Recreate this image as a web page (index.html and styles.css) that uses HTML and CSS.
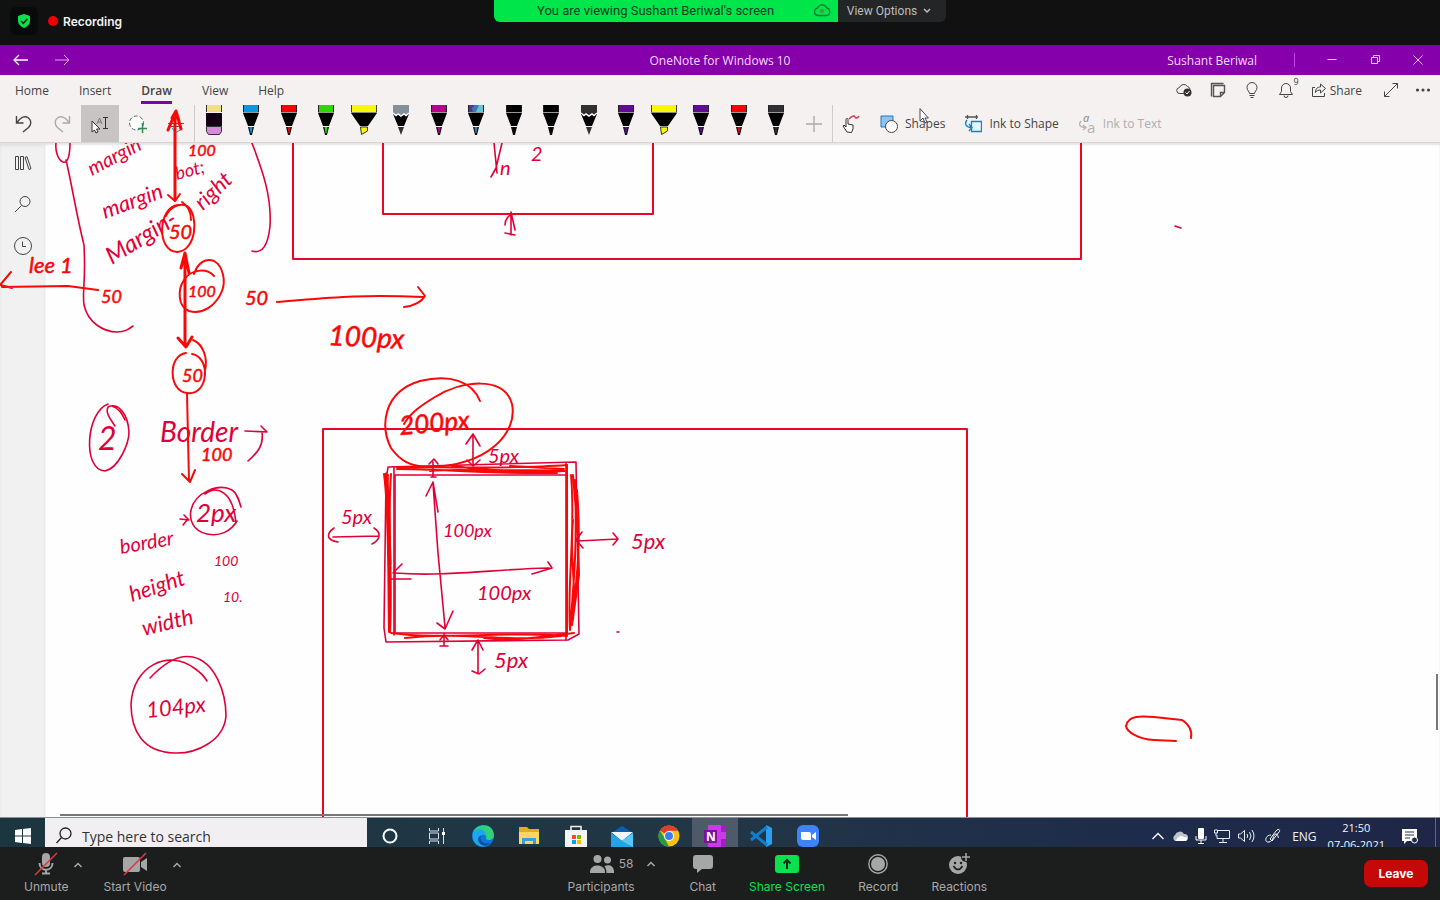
FILE: index.html
```html
<!DOCTYPE html>
<html lang="en">
<head>
<meta charset="utf-8">
<meta name="viewport" content="width=device-width, initial-scale=1">
<title>OneNote for Windows 10 - shared screen</title>
<link rel="stylesheet" href="styles.css">
</head>
<body>
<svg class="defs" aria-hidden="true">
  <symbol id="pen" viewBox="0 0 28 30">
    <path d="M6 0h16v7H6z" fill="currentColor"/><path d="M6.500 0v7M21.500 0v7" stroke="#222"/>
    <path d="M6 8h16l-5 13h-6z" fill="#000"/><path d="M6 7.500h16" stroke="#999"/>
    <path d="M11 22h6l-2 8h-2z" fill="#111"/><path d="M12.500 22h3l-1 6h-1z" fill="currentColor"/>
  </symbol>
  <symbol id="marker" viewBox="0 0 28 30">
    <path d="M1 0h26v7H1z" fill="currentColor"/><path d="M1.500 0v7M26.500 0v7" stroke="#444"/>
    <path d="M1 8h26L18 21h-8z" fill="#000"/><path d="M1 7.500h26" stroke="#888"/>
    <path d="M10.500 22h7v4l-6 3.500z" fill="currentColor" stroke="#333"/>
  </symbol>
  <symbol id="pencil" viewBox="0 0 28 30">
    <path d="M6 0h16v10H6z" fill="currentColor"/><path d="M6 9l3 2 2-2 3 2 3-2 2 2 3-2-5 12h-6z" fill="#000"/>
    <path d="M6 8l3 2.500L11 9l3 2 3-2 2 1.500L22 8" fill="none" stroke="#fff" stroke-width="1.500"/>
    <path d="M11 22h6l-3 8z" fill="#333"/>
  </symbol>
  <symbol id="up" viewBox="0 0 10 10"><path d="M1.500 7 5 3.500 8.500 7" fill="none" stroke="currentColor" stroke-width="1.500"/></symbol>
</svg>

<header class="meeting-top">
  <div class="rec">
    <span class="shield"><svg width="14" height="16" viewBox="0 0 14 16"><path d="M7 1l6 2v5c0 3-2.500 5.500-6 7-3.500-1.500-6-4-6-7V3z" fill="#0be04f"/><path d="M4 8l2.300 2.300L10.300 6" fill="none" stroke="#0a2a12" stroke-width="1.600"/></svg></span>
    <span class="dot"></span><strong>Recording</strong>
  </div>
  <div class="banner">
    <div class="viewing"><span>You are viewing Sushant Beriwal's screen</span>
      <svg width="18" height="14" viewBox="0 0 18 14"><path d="M5 12.500a3.700 3.700 0 0 1-.6-7.300A5 5 0 0 1 13.800 5a3.800 3.800 0 0 1-.5 7.500z" fill="none" stroke="#157a35" stroke-width="1.300"/><circle cx="9" cy="8" r="2" fill="#5a8a3a"/></svg></div>
    <button class="view-options">View Options <svg width="8" height="6" viewBox="0 0 8 6"><path d="M1 1l3 3 3-3" fill="none" stroke="currentColor" stroke-width="1.500"/></svg></button>
  </div>
</header>

<div class="titlebar">
  <nav class="history">
    <button aria-label="Back"><svg width="16" height="12" viewBox="0 0 16 12"><path d="M15 6H1M6 1L1 6l5 5" fill="none" stroke="#fff" stroke-width="1.300"/></svg></button>
    <button aria-label="Forward"><svg width="16" height="12" viewBox="0 0 16 12"><path d="M1 6h14M10 1l5 5-5 5" fill="none" stroke="#e3a6f5"/></svg></button>
  </nav>
  <span class="app-name">OneNote for Windows 10</span>
  <div class="window">
    <span class="user">Sushant Beriwal</span>
    <button aria-label="Minimize"><svg width="12" height="12" viewBox="0 0 12 12"><path d="M1.500 5.500h9" stroke="#f2c8ff"/></svg></button>
    <button aria-label="Restore"><svg width="12" height="12" viewBox="0 0 12 12"><path d="M2.500 3.500h6v6h-6zM4.500 3.500v-2h6v6h-2" fill="none" stroke="#f2c8ff"/></svg></button>
    <button aria-label="Close"><svg width="12" height="12" viewBox="0 0 12 12"><path d="M1.500 1.500l9 9m0-9l-9 9" stroke="#f2c8ff"/></svg></button>
  </div>
</div>

<main class="notebook">
  <div class="menu">
    <nav class="tabs">
      <button>Home</button><button>Insert</button><button class="on">Draw</button><button>View</button><button>Help</button>
    </nav>
    <div class="actions">
      <button aria-label="Synced"><svg width="18" height="18" viewBox="0 0 18 18"><path d="M9 12.500H5a3 3 0 0 1-.5-6 4.500 4.500 0 0 1 8-1A3.500 3.500 0 0 1 15 8" fill="none" stroke="#444"/><circle cx="12.500" cy="11.500" r="4" fill="#333"/><path d="M10.500 11.500l1.500 1.500 2.500-3" fill="none" stroke="#fff"/></svg></button>
      <button aria-label="Notes"><svg width="18" height="18" viewBox="0 0 18 18"><path d="M2.500 15.500v-13h12M4.500 4.500h11v7l-4 4h-7zM15.500 11.500h-4v4" fill="none" stroke="#555" stroke-width="1.400"/></svg></button>
      <button aria-label="Tips"><svg width="18" height="18" viewBox="0 0 18 18"><path d="M6.500 12.500c0-2-2.500-3-2.500-6a5 5 0 0 1 10 0c0 3-2.500 4-2.500 6zM6.500 14.500h5M7.500 16.500h3" fill="none" stroke="#444"/></svg></button>
      <button aria-label="Notifications" class="bell"><svg width="18" height="18" viewBox="0 0 18 18"><path d="M2.500 13.500h13l-2-3V7a4.500 4.500 0 0 0-9 0v3.500zM7 14.500a2 2 0 0 0 4 0" fill="none" stroke="#444"/></svg><sup>9</sup></button>
      <button class="share"><svg width="16" height="16" viewBox="0 0 16 16"><path d="M4 5.500H1.500v9h12V11M4.500 10.500c0-4 2-5.500 5-5.500V2l5 4.500-5 4.500V8c-2 0-4 .5-5 2.500z" fill="none" stroke="#444"/></svg>Share</button>
      <button aria-label="Full screen" class="full"><svg width="16" height="16" viewBox="0 0 16 16"><path d="M1.500 14.500l13-13M9.500 1.500h5v5M1.500 9.500v5h5" fill="none" stroke="#444"/></svg></button>
      <button aria-label="More"><svg width="16" height="6" viewBox="0 0 16 6" fill="#444"><circle cx="2.500" cy="3" r="1.600"/><circle cx="8" cy="3" r="1.600"/><circle cx="13.500" cy="3" r="1.600"/></svg></button>
    </div>
  </div>

  <div class="toolbar">
    <div class="tools">
      <button aria-label="Undo"><svg width="18" height="20" viewBox="0 0 18 20"><path d="M1.500 2v7h7M2 8.500C6 3 10 1.500 13.500 4c3.500 3 2.500 7 0 9.500L8 18" fill="none" stroke="#444" stroke-width="1.400"/></svg></button>
      <button aria-label="Redo"><svg width="18" height="20" viewBox="0 0 18 20"><path d="M16.500 2v7h-7M16 8.500C12 3 8 1.500 4.500 4c-3.500 3-2.500 7 0 9.500L10 18" fill="none" stroke="#aaa" stroke-width="1.400"/></svg></button>
      <button aria-label="Select or type" class="on"><svg width="20" height="20" viewBox="0 0 20 20"><path d="M13 3.500h5M15.500 3.500v11M13 14.500h5" stroke="#333" fill="none"/><path d="M7 10l2.500-6L12 10M8 8h3" stroke="#777" fill="none"/><path d="M2 7v11l2.500-2 1.500 3 2-1-1.500-3H10z" fill="#fff" stroke="#333"/></svg></button>
      <button aria-label="Lasso select"><svg width="20" height="20" viewBox="0 0 20 20"><circle cx="8.500" cy="9" r="7" fill="#fff" stroke="#666" stroke-dasharray="4 2"/><path d="M14.500 9v10M10 14.500h9" stroke="#2e8b57" stroke-width="1.500"/></svg></button>
      <button aria-label="Insert space"><svg width="18" height="20" viewBox="0 0 18 20"><path d="M1 9.500h16M4 12.500h11" stroke="#555"/><path d="M5 14l2 3 3 1 3-2" fill="none" stroke="#2a8ac0"/></svg></button>
    </div>
    <div class="pens">
      <button aria-label="Eraser"><svg width="28" height="30" viewBox="0 0 28 30"><path d="M6 0h16v7H6z" fill="#f2df83"/><path d="M6.500 0v7M21.500 0v7" stroke="#333"/><path d="M6 8h16v13H6z" fill="#130014"/><path d="M6.500 21.500h15v5l-2 3h-11l-2-3z" fill="#d88bdb" stroke="#333"/></svg></button>
      <button aria-label="Blue pen" class="blue"><svg width="28" height="30"><use href="#pen"/></svg></button>
      <button aria-label="Red pen" class="red"><svg width="28" height="30"><use href="#pen"/></svg></button>
      <button aria-label="Green pen" class="green"><svg width="28" height="30"><use href="#pen"/></svg></button>
      <button aria-label="Yellow highlighter" class="yellow"><svg width="28" height="30"><use href="#marker"/></svg></button>
      <button aria-label="Grey pencil" class="grey"><svg width="28" height="30"><use href="#pencil"/></svg></button>
      <button aria-label="Magenta pen" class="magenta"><svg width="28" height="30"><use href="#pen"/></svg></button>
      <button aria-label="Galaxy pen" class="galaxy"><svg width="28" height="30"><use href="#pen"/><path d="M7 0h6l-3 3 1 4H7z" fill="#4b3b8f"/><path d="M17 0h4v7h-7z" fill="#62c5cf"/></svg></button>
      <button aria-label="Black pen" class="black"><svg width="28" height="30"><use href="#pen"/></svg></button>
      <button aria-label="Black pen 2" class="black"><svg width="28" height="30"><use href="#pen"/></svg></button>
      <button aria-label="Dark pencil" class="dark"><svg width="28" height="30"><use href="#pencil"/></svg></button>
      <button aria-label="Purple pen" class="purple"><svg width="28" height="30"><use href="#pen"/></svg></button>
      <button aria-label="Yellow highlighter 2" class="yellow"><svg width="28" height="30"><use href="#marker"/></svg></button>
      <button aria-label="Purple pen 2" class="purple"><svg width="28" height="30"><use href="#pen"/></svg></button>
      <button aria-label="Red pen 2" class="red"><svg width="28" height="30"><use href="#pen"/></svg></button>
      <button aria-label="Dark pen" class="dark"><svg width="28" height="30"><use href="#pen"/></svg></button>
    </div>
    <button aria-label="Add pen" class="add"><svg width="16" height="16" viewBox="0 0 16 16"><path d="M0 8h16M8 0v16" stroke="#aaa" stroke-width="1.300"/></svg></button>
    <div class="ink-tools">
      <button aria-label="Draw with touch"><svg width="20" height="20" viewBox="0 0 20 20"><path d="M8 5c3-3 5-4 6-2s3 1 4-1" fill="none" stroke="#d9304f" stroke-width="1.500"/><path d="M6 18l-4-6 1-1 2 2V5.500a1 1 0 0 1 2 0V10l5 1v4l-1.500 3.500z" fill="#fff" stroke="#333"/></svg></button>
      <button><svg width="18" height="18" viewBox="0 0 18 18"><path d="M1 1h12v11H1z" fill="#8ec5f0" stroke="#2677bd"/><circle cx="11.500" cy="11.500" r="6" fill="#fff" stroke="#444"/></svg>Shapes</button>
      <button><svg width="18" height="18" viewBox="0 0 18 18"><path d="M1 2h13M3.500 0v4M12.500 0v4" stroke="#555" stroke-width="1.300"/><path d="M7.500 6.500h10v10h-10z" fill="#e8f4ff" stroke="#1683c4" stroke-width="1.300"/><path d="M3 5c-3 4-1 7 4 7.500M5 9l3 3.500L5 16" fill="none" stroke="#1683c4" stroke-width="1.300"/></svg>Ink to Shape</button>
      <button disabled><svg width="18" height="20" viewBox="0 0 18 20" aria-hidden="true"><path d="M3 7c-3 4-1 6 4 6.500M5 11l3 2.500L5 16" fill="none" stroke="#b5b3b2" stroke-width="1.300"/><text x="5" y="8" class="glyph-small">a</text><text x="9" y="19" class="glyph-big">a</text></svg>Ink to Text</button>
    </div>
  </div>

  <div class="workspace">
    <aside class="rail">
      <button aria-label="Notebooks"><svg width="18" height="16" viewBox="0 0 18 16"><path d="M1.500 1.500h3v13h-3zM6.500 1.500h3v13h-3zM11 2.500l2-.8 4 12-2 .8z" fill="none" stroke="#444"/></svg></button>
      <button aria-label="Search"><svg width="16" height="18" viewBox="0 0 16 18"><circle cx="10" cy="6.500" r="5" fill="none" stroke="#444"/><path d="M6.500 10.500L0 17" stroke="#444"/></svg></button>
      <button aria-label="Recent"><svg width="18" height="18" viewBox="0 0 18 18"><path d="M9 .5a8.500 8.500 0 1 0 0 17 8.500 8.500 0 0 0 0-17zM8.500 4.500v5H12" fill="none" stroke="#444"/></svg></button>
    </aside>
    <div class="page"></div>
  </div>

  <svg class="ink" role="img" aria-label="Handwritten notes on the box model">
    <svg y="68" width="100%" height="100%" overflow="hidden"><g transform="translate(0,-143)" class="crimson">
      <path d="M293 140V259H1081V140M383 140V214H653V140M323 830V429H967V830" class="frame"/>
      <path d="M56 143c-1 8 2 17 7 19s7-8 7-19M66 160C72 185 76 213 84 245c2 40-2 45 0 60 4 18 20 27 33 27 8 0 12-3 16-6M252 143c8 22 20 50 18 83-2 20-8 28-18 25"/>
      <path d="M494 143l3 30M502 143l-6 25-5 9"/>
      <path d="M511 235V212M505 225c0-6 4-10 7-10M511 212l4 18M505 233l10 2"/>
      <path d="M1175 226l6 2M617 632h2"/>
      <path d="M108 404c-22 8-26 66-3 67 14-3 24-28 24-39-1-18-11-30-21-25-3 6 3 13 7 19M112 406c7 2 10 8 13 14"/>
      <path d="M245 431l22 1-6-6M262 432c2 14-5 21-14 29"/>
      <path d="M180 519l9 1-5-5M188 519l-5 6"/>
      <path d="M237 521c-6 10-17 16-30 13-14-3-18-14-16-24 4-18 28-27 41-20 5 3 7 10 9 17M205 494c12-9 28-3 31 29"/>
      <path d="M150 678c14-15 28-24 43-21 22 5 33 35 33 59-2 25-30 38-52 37-31-1-43-22-43-49 2-38 37-55 63-36 6 4 10 8 13 13"/>
      <!-- double-walled box -->
      <path d="M395 475H567V633H395zM388 467L576 462 579 634 568 640 386 642 384 628 386 480z"/>
      <path d="M566 463V640M394 467v168"/>
      <g class="red">
        <path d="M384 474c5 35 4 100 5 158M388 475c-3 40 5 120 1 155M391 474c-4 50 2 100-1 158" stroke-width="2"/>
        <path d="M386 474c3 20 3 60 4 90" stroke-width="3"/>
        <path d="M397 467c50 0 120 2 170-2M450 465c40 8 80 4 115 6M430 471c40-4 90 3 135 0M510 466l54 3M397 469c50 0 80 5 160 4" stroke-width="2"/>
        <path d="M567 465V635M571 475c5 55-4 105-1 155M575 480c2 60 0 90-5 150M573 475l5 60 1 40-7 50M577 490c4 50 1 80-5 130M573 520c-4 40 4 60 0 100" stroke-width="2"/>
        <path d="M391 633c50 7 110-2 176 3M405 638c60-7 100 5 156-2M484 638c30 4 60-2 90-5" stroke-width="2"/>
      </g>
      <path d="M433 462v14M429 464l5-5 4 5M431 477l5 0M444 634v12M440 640l4-5 4 5M440 646h8"/>
      <path d="M433 483l5 70 7 74M426 496l7-14 5 30M437 623l8 6 8-18"/>
      <path d="M395 573c50 4 100-4 154-5M402 564l-9 9M391 579h20M548 562l4 6-20 6"/>
      <path d="M473 464v-29M466 444l7-10 7 12M467 460l6 6 7-6"/>
      <path d="M333 537l46-1M334 528c-8 6-8 12 4 14M374 528c8 5 6 12-2 16"/>
      <path d="M578 541l40-2M582 532l-6 8 7 8M613 533l5 6-5 6"/>
      <path d="M478 673V641M472 650l6-10 5 10M472 671l7 3 6-5"/>
      <!-- handwriting on the page -->
      <g class="hand">
        <text transform="translate(92 176) rotate(-28)" font-size="20">margin</text>
        <text transform="translate(105 219) rotate(-20)" font-size="22">margin</text>
        <text transform="translate(177 180) rotate(-15)" font-size="18">bot;</text>
        <text transform="translate(112 265) rotate(-32)" font-size="24">Margin-</text>
        <text transform="translate(203 211) rotate(-44)" font-size="22">right</text>
        <text x="500" y="175" font-size="20">n</text><text x="531" y="161" font-size="20">2</text>
        <text x="98" y="450" font-size="32">2</text>
        <text x="160" y="442" font-size="28">Border</text>
        <text transform="translate(121 554) rotate(-10)" font-size="20">border</text>
        <text x="196" y="522" font-size="26">2px</text>
        <text x="214" y="566" font-size="14">100</text><text x="223" y="602" font-size="14">10.</text>
        <text transform="translate(132 602) rotate(-18)" font-size="22">height</text>
        <text transform="translate(144 636) rotate(-14)" font-size="22">width</text>
        <text transform="translate(147 718) rotate(-6)" font-size="22">104px</text>
        <text x="341" y="524" font-size="20">5px</text>
        <text x="443" y="537" font-size="18">100px</text>
        <text x="477" y="600" font-size="20">100px</text>
        <text x="488" y="463" font-size="20">5px</text>
        <text x="631" y="549" font-size="22">5px</text>
        <text x="494" y="668" font-size="22">5px</text>
      </g>
    </g></svg>
    <g transform="translate(0,-75)" class="red">
      <path d="M175 200V113M168 130l8-19 5 18M172 118l4-7 3 10" stroke-width="3"/>
      <path d="M168 195l7 6 5-7"/>
      <path d="M178 205c-20 2-22 46-1 47 20-1 22-38 10-46-8-4-18 2-21 10M182 202c6 4 9 10 9 18"/>
      <path d="M185 346V253M181 268l4-15 4 20M178 338l8 9 6-10" stroke-width="3"/>
      <path d="M194 274c4-12 12-16 20-13 9 5 12 20 8 30-6 15-20 24-33 20-12-5-11-22-5-31 6-10 22-13 30-4"/>
      <path d="M98 290l-30-4-66 1M11 272L0 285l12 3"/>
      <path d="M277 302c50-4 80-8 146-5M418 287l7 9c-4 7-13 10-21 11"/>
      <path d="M186 353c-18 2-18 38 1 40 22 3 24-36 5-39M193 340c10 4 15 18 12 30"/>
      <path d="M187 393l2 88M182 474l8 8 5-12"/>
      <path d="M480 401c-8-20-30-27-60-20-37 11-40 45-29 67 10 14 20 18 37 19 60-1 90-34 84-63-8-29-51-23-77-7-13 8-24 15-31 27"/>
      <path d="M1176 741l-22-1c-16-1-27-8-28-14 2-11 16-10 28-9l28 3c8 5 10 12 9 18"/>
      <g class="hand heavy">
        <text x="188" y="156" font-size="16">100</text>
        <text x="169" y="239" font-size="20">50</text>
        <text x="188" y="297" font-size="16">100</text>
        <text x="101" y="303" font-size="18">50</text>
        <text x="245" y="305" font-size="20">50</text>
        <text x="29" y="273" font-size="22">lee 1</text>
        <text transform="translate(328 345) rotate(3)" font-size="28">100px</text>
        <text x="182" y="382" font-size="18">50</text>
        <text x="201" y="461" font-size="18">100</text>
        <text transform="translate(400 435) rotate(-5)" font-size="26">200px</text>
      </g>
    </g>
    <path class="cursor" d="M920 34v12l3-3 2 5 2-1-2-4h3z"/>
  </svg>
  <div class="scroll-y"></div>
  <div class="scroll-x"></div>
</main>

<footer class="taskbar">
  <button class="start" aria-label="Start"><svg width="16" height="16" viewBox="0 0 16 16" fill="#fff"><path d="M0 2l7-1v6.500H0zM8 1l8-1v7.500H8zM0 8.500h7V15l-7-1zM8 8.500h8V16l-8-1z"/></svg></button>
  <label class="find"><svg width="16" height="18" viewBox="0 0 16 18"><circle cx="9.500" cy="6.500" r="5.500" fill="none" stroke="#222" stroke-width="1.300"/><path d="M5.500 10.500L.5 16" stroke="#222" stroke-width="1.300"/></svg><input type="text" placeholder="Type here to search" aria-label="Type here to search"></label>
  <div class="apps">
    <button aria-label="Cortana"><svg width="24" height="24" viewBox="0 0 24 24"><circle cx="12" cy="12" r="6.500" fill="none" stroke="#fff" stroke-width="2"/></svg></button>
    <button aria-label="Task view"><svg width="24" height="24" viewBox="0 0 24 24"><path d="M4.500 4v3h9V4M4.500 9h9v6h-9zM4.500 20v-3h9v3M18.500 4v16" fill="none" stroke="#dde"/><path d="M17 8h3v3h-3z" fill="#fff"/></svg></button>
    <button aria-label="Edge"><svg width="24" height="24" viewBox="0 0 24 24"><circle cx="12" cy="12" r="11" fill="#0c77d8"/><path d="M2 8C6-1 22-2 23 11c0 5-5 6-8 4 2-7-7-11-13-7z" fill="#31d07c"/><path d="M2 8c5-5 13-3 13 4-4-3-8 0-7 5 1 3 4 5 7 5C6 24 0 17 2 8z" fill="#1aa8ee"/><path d="M10 12c-2 4 2 9 9 7-3 4-11 3-12-3 0-2 1-4 3-4z" fill="#0a4d9e"/></svg></button>
    <button aria-label="File Explorer"><svg width="24" height="24" viewBox="0 0 24 24"><path d="M2 3h8l2 2h10v15H2z" fill="#e8a91c"/><path d="M2 8h20v12H2z" fill="#ffd75a"/><path d="M5 20v-6h14v6h-3v-3H8v3z" fill="#3b9bdc"/></svg></button>
    <button aria-label="Store"><svg width="24" height="24" viewBox="0 0 24 24"><path d="M7 7V2.500h10V7" fill="none" stroke="#eee" stroke-width="1.600"/><path d="M1 6h22v17H1z" fill="#f5f5f5"/><path d="M8 11h4v4H8z" fill="#f05022"/><path d="M13 11h4v4h-4z" fill="#7fba00"/><path d="M8 16h4v4H8z" fill="#00a4ef"/><path d="M13 16h4v4h-4z" fill="#ffb900"/></svg></button>
    <button aria-label="Mail"><svg width="24" height="24" viewBox="0 0 24 24"><path d="M1 9l11-7 11 7v14H1z" fill="#0c5fae"/><path d="M1 8h22l-11 9z" fill="#f0f5fa"/><path d="M1 9l11 8 11-8v14H1z" fill="#1fa4ea"/><path d="M12 17l11-8v14z" fill="#57c7f5"/></svg></button>
    <button aria-label="Chrome"><svg width="24" height="24" viewBox="0 0 24 24"><circle cx="12" cy="12" r="10.500" fill="#fbc116"/><path d="M12 12L3 6.500A10.500 10.500 0 0 1 21.100 6.800H12z" fill="#e33b2e"/><path d="M3 6.500L8 15l4 7.500A10.500 10.500 0 0 1 3 6.500z" fill="#249a4b"/><circle cx="12" cy="12" r="5" fill="#fff"/><circle cx="12" cy="12" r="4" fill="#3b7ded"/></svg></button>
    <button aria-label="OneNote" class="on"><svg width="24" height="24" viewBox="0 0 24 24"><path d="M5 1h18v22H5z" fill="#c93be8"/><path d="M18 1h5v7h-5zM18 15h5v8h-5z" fill="#a11dc4"/><path d="M1 6h13v13H1z" fill="#7a1398"/><text x="3" y="17" class="app-letter">N</text></svg></button>
    <button aria-label="VS Code"><svg width="24" height="24" viewBox="0 0 24 24"><path d="M17 1l6 3v16l-6 3z" fill="#2c9ff0"/><path d="M2 8l16 13M2 16L18 3" stroke="#1180cc" stroke-width="3"/></svg></button>
    <button aria-label="Zoom"><svg width="24" height="24" viewBox="0 0 24 24"><rect x="1" y="1" width="22" height="22" rx="6" fill="#3f83f8"/><path d="M5 8h8a2 2 0 0 1 2 2v6H7a2 2 0 0 1-2-2zM16 11l4-3v8l-4-3z" fill="#fff"/></svg></button>
  </div>
  <div class="tray">
    <svg width="14" height="10" viewBox="0 0 14 10"><path d="M1.500 8L7 2.500 12.500 8" fill="none" stroke="#fff" stroke-width="1.300"/></svg>
    <svg width="18" height="12" viewBox="0 0 18 12"><path d="M4 11a3.500 3.500 0 0 1 0-6 5 5 0 0 1 9-1 3.500 3.500 0 0 1 1 7z" fill="#bbc3cc"/><path d="M5 11c1-5 6-6 8-4 3-1 4 3 2 4z" fill="#fff"/></svg>
    <svg width="12" height="16" viewBox="0 0 12 16"><rect x="3" y="0" width="6" height="11" rx="1" fill="#fff"/><path d="M1 8v4h10V8M6 12v3.500M3 15.500h6" fill="none" stroke="#fff"/></svg>
    <svg width="18" height="16" viewBox="0 0 18 16"><path d="M5 2.500h11.500v8H4V7M10 11v3M6 14.500h8M1.500 2v3h3V2zM3 5v3" fill="none" stroke="#e8edf5"/></svg>
    <svg width="18" height="14" viewBox="0 0 18 14"><path d="M1.500 5h2l4-3.500v11l-4-3.500h-2zM10 5q1.500 2 0 4M12.500 3q3 4 0 8M15 1q4 6 0 12" fill="none" stroke="#e8edf5"/></svg>
    <svg class="penlink" width="18" height="16" viewBox="0 0 18 16"><path d="M6 11l6-8c2-3 5-1 3 1l-7 9zM7 7c-6 0-7 8-2 7 5-1 4-8 7-8s1 5 3 3" fill="none" stroke="#fff"/></svg>
    <span class="lang">ENG</span>
    <time class="clock"><span>21:50</span><span>07-06-2021</span></time>
    <svg width="18" height="16" viewBox="0 0 18 16"><path d="M1 1h15v12H6l-3 3v-3H1z" fill="#fff"/><path d="M4 4h9M4 7h9M4 10h5" stroke="#22304e"/><circle cx="13.500" cy="12" r="3" fill="#1e2b49" stroke="#fff"/></svg>
    <i class="peek"></i>
  </div>
</footer>

<footer class="meeting-bar">
  <div class="group left">
    <button class="item"><svg width="24" height="24" viewBox="0 0 24 24"><rect x="8" y="1" width="8" height="14" rx="4" fill="#a6a6a6"/><path d="M5.500 11c0 9 13 9 13 0M12 17v4M8 21.500h8" fill="none" stroke="#a6a6a6" stroke-width="2"/><path d="M1 23L23 1" stroke="#d8393f" stroke-width="1.600"/></svg>Unmute</button>
    <button class="caret" aria-label="Audio options"><svg width="10" height="10"><use href="#up"/></svg></button>
    <button class="item"><svg width="24" height="24" viewBox="0 0 24 24"><rect x="0" y="5" width="17" height="15" rx="2" fill="#a6a6a6"/><path d="M18 10l6-4v13l-6-4z" fill="#a6a6a6"/><path d="M1 23L23 1" stroke="#d8393f" stroke-width="1.600"/></svg>Start Video</button>
    <button class="caret" aria-label="Video options"><svg width="10" height="10"><use href="#up"/></svg></button>
  </div>
  <div class="group mid">
    <button class="item people"><span class="row"><svg width="24" height="20" viewBox="0 0 24 20" fill="#a6a6a6"><circle cx="7.500" cy="5" r="4"/><path d="M0 19c-1-10 16-10 15 0z"/><circle cx="17.500" cy="6" r="3.500"/><path d="M16.500 19c0-3-1-5-2-7 5-2 10 0 9.500 7z"/></svg><b>58</b><svg width="10" height="10"><use href="#up"/></svg></span>Participants</button>
    <button class="item"><svg width="20" height="20" viewBox="0 0 20 20"><path d="M3 1h14a3 3 0 0 1 3 3v8a3 3 0 0 1-3 3H9l-5 4v-4H3a3 3 0 0 1-3-3V4a3 3 0 0 1 3-3z" fill="#a6a6a6"/></svg>Chat</button>
    <button class="item go"><svg width="24" height="20" viewBox="0 0 24 20"><rect y="1" width="24" height="18" rx="3" fill="#0be04f"/><path d="M12 15V6M8.500 9.500L12 6l3.500 3.500" fill="none" stroke="#12301b" stroke-width="2"/></svg>Share Screen</button>
    <button class="item"><svg width="20" height="20" viewBox="0 0 20 20"><circle cx="10" cy="10" r="9.200" fill="none" stroke="#a6a6a6" stroke-width="1.400"/><circle cx="10" cy="10" r="7" fill="#a6a6a6"/></svg>Record</button>
    <button class="item"><svg width="22" height="22" viewBox="0 0 22 22"><circle cx="10" cy="12" r="9" fill="#a6a6a6"/><circle cx="18" cy="4" r="5" fill="#1c1d1d"/><path d="M18 0v8M14 4h8" stroke="#a6a6a6" stroke-width="1.500"/><path d="M5.500 13q4.500 7 9 0" fill="none" stroke="#1c1d1d" stroke-width="1.600"/><circle cx="7" cy="10" r="1.200" fill="#1c1d1d"/><circle cx="13" cy="10" r="1.200" fill="#1c1d1d"/></svg>Reactions</button>
  </div>
  <div class="group right"><button class="leave">Leave</button></div>
</footer>
</body>
</html>
```

FILE: styles.css
```css
* { box-sizing: border-box; }
body { margin: 0; min-height: 100vh; display: flex; flex-direction: column; background: #111; font-family: "Open Sans", "Noto Sans", sans-serif; font-size: 12px; color: #444; overflow-x: hidden; }
button { border: 0; padding: 0; background: none; font: inherit; color: inherit; display: flex; align-items: center; justify-content: center; }
svg { display: block; flex: none; }
.defs { position: absolute; width: 0; height: 0; }

/* Meeting header */
.meeting-top { height: 45px; display: grid; grid-template-columns: 1fr auto 1fr; align-items: start; background: #111; font-family: Inter, sans-serif; }
.rec { display: flex; align-items: center; color: #f2f2f2; padding: 7px 10px; font-size: 12px; }
.rec strong { font-weight: 600; }
.shield { width: 28px; height: 28px; border-radius: 6px; background: #070b09; display: flex; align-items: center; justify-content: center; }
.dot { width: 10px; height: 10px; border-radius: 50%; background: #f00000; margin: 0 5px 0 10px; }
.banner { display: flex; height: 22px; border-radius: 0 0 6px 6px; overflow: hidden; font-family: Roboto, sans-serif; }
.viewing { width: 344px; background: #00e64a; color: #143d22; display: flex; align-items: center; justify-content: space-between; padding: 0 7px 2px 43px; font-size: 13px; }
.view-options { width: 108px; background: #242526; color: #bdbdbd; gap: 6px; padding: 0 6px 1px 0; font-size: 12px; }

/* Title bar */
.titlebar { height: 30px; background: #8500ab; color: #f6dcff; display: grid; grid-template-columns: 1fr auto 1fr; align-items: center; }
.history { display: flex; gap: 25px; padding-left: 13px; }
.window { display: flex; align-items: center; justify-content: flex-end; gap: 31px; padding-right: 16px; }
.user { padding-right: 38px; background: linear-gradient(#c344e6, #c344e6) right / 1px 14px no-repeat; }

/* OneNote */
.notebook { flex: 1; display: flex; flex-direction: column; position: relative; overflow: hidden; background: #fefefe; }
.menu { height: 30px; display: flex; justify-content: space-between; background: #f4f1f0; }
.tabs { display: flex; gap: 30px; padding-left: 15px; }
.tabs button { height: 29px; padding-top: 4px; border-bottom: 3px solid transparent; }
.tabs .on { font-weight: 600; border-color: #8000a8; }
.actions { display: flex; align-items: center; gap: 16px; padding-right: 9px; }
.bell { position: relative; }
.bell sup { position: absolute; right: -4px; top: -5px; font-size: 9px; line-height: 12px; }
.actions .share { gap: 3px; }
.actions .full { margin-left: 5px; }
.toolbar { height: 38px; display: flex; background: #f4f1f0; border-bottom: 1px solid #d8d5d4; }
.tools { width: 190px; margin-left: 5px; display: grid; grid-template-columns: repeat(5, 1fr); }
.tools .on { background: #c7c4c3; }
.pens { width: 600px; display: grid; grid-template-columns: repeat(16, 1fr); box-shadow: -1px 0 #ccc; }
.pens button { align-items: flex-start; }
.blue { color: #0b98e0; }
.red { color: #f90009; }
.green { color: #2fd500; }
.yellow { color: #f8f800; }
.grey { color: #83929a; }
.magenta { color: #b6008e; }
.galaxy { color: #3e79ad; }
.black { color: #000; }
.dark { color: #303032; }
.purple { color: #5e0c96; }
.add { width: 38px; border-right: 1px solid #ccc; }
.ink-tools { display: flex; align-items: center; gap: 19px; padding-left: 8px; }
.ink-tools button { gap: 7px; }
.ink-tools button:disabled { color: #b0adac; }
.glyph-small { font: italic 11px "Open Sans", sans-serif; fill: #888; }
.glyph-big { font: 15px "Open Sans", sans-serif; fill: #b5b3b2; }
.workspace { flex: 1; display: flex; }
.rail { width: 45px; background: #f2f1f2; display: flex; flex-direction: column; align-items: center; gap: 24px; padding-top: 12px; box-shadow: inset 0 3px 3px #e2e0e0; }
.page { flex: 1; box-shadow: inset 0 2px 2px #e6e4e4; }
.scroll-y { position: absolute; right: 2px; bottom: 87px; width: 2px; height: 56px; background: #777; }
.scroll-x { position: absolute; left: 60px; bottom: 1px; width: 788px; height: 2px; background: #777; }

/* Pen strokes and handwriting laid over the page */
.ink { position: absolute; inset: 0; width: 100%; height: 100%; pointer-events: none; fill: none; stroke-width: 2; stroke-linecap: round; stroke-linejoin: round; }
.ink .crimson { stroke: #e00038; stroke-width: 1.600; }
.ink .frame { stroke: #ea0628; stroke-width: 2; }
.ink .red { stroke: #f80808; }
.ink .hand { font-family: Lato, sans-serif; font-style: italic; stroke: none; fill: #e00038; }
.ink .heavy { fill: #f80808; stroke: #f80808; stroke-width: 0.5; }
.ink .cursor { fill: #fff; stroke: #445; stroke-width: 1; }

/* Windows taskbar */
.taskbar { height: 30px; overflow: hidden; display: flex; align-items: flex-start; color: #f2f4f8; border-top: 1px solid #8a9198; background: linear-gradient(90deg, #1c3640, #213646 50%, #1e2b4a 80%, #1f2648); }
.taskbar button { height: 36px; }
.start { width: 45px; }
.find { width: 322px; height: 36px; display: flex; align-items: center; gap: 10px; padding-left: 11px; background: #f2eff2; }
.find input { flex: 1; min-width: 0; border: 0; padding: 0; background: none; font: 14px "Open Sans", sans-serif; }
.find input::placeholder { color: #333; opacity: 1; }
.apps { display: grid; grid-template-columns: repeat(10, 1fr); width: 464px; }
.apps .on { background: #4c5a6a; }
.app-letter { font: 700 12px "Open Sans", sans-serif; fill: #fff; }
.tray { margin-left: auto; height: 36px; display: flex; align-items: center; gap: 6px; }
.penlink { margin-left: 3px; }
.lang { margin: 0 5px 0 4px; }
.clock { display: flex; flex-direction: column; align-items: center; line-height: 17px; font-size: 11px; margin-right: 10px; }
.peek { width: 1px; height: 36px; background: #667; margin: 0 4px 0 10px; }

/* Meeting controls */
.meeting-bar { height: 53px; background: #1c1d1d; color: #a8a8a8; display: grid; grid-template-columns: 546fr auto 453fr; font-family: Inter, sans-serif; font-size: 12px; }
.group { display: flex; align-items: flex-start; }
.left { padding-left: 24px; }
.item { flex-direction: column; justify-content: flex-end; height: 48px; gap: 3px; line-height: 16px; }
.item > svg, .row { height: 24px; }
.caret { height: 36px; width: 20px; }
.left .caret:nth-child(2) { margin-right: 15px; }
.mid { gap: 33px; }
.row { display: flex; align-items: center; gap: 5px; margin-left: 44px; }
.row b { font-weight: 400; }
.row svg:last-child { margin-left: 8px; }
.go { color: #0be04f; }
.right { justify-content: flex-end; padding: 13px 12px 0 0; }
.leave { width: 64px; height: 27px; border-radius: 7px; background: #c50808; color: #fff; font-weight: 700; }
```
